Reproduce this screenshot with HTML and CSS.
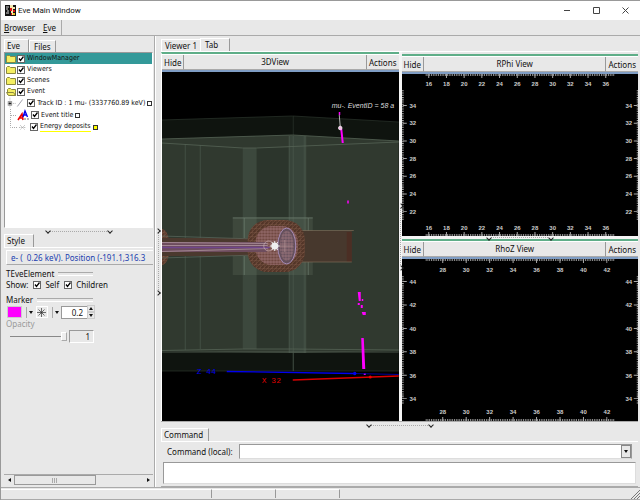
FILE: index.html
```html
<!DOCTYPE html>
<html lang="en">

<head>
  <meta charset="utf-8">
  <title>Eve Main Window</title>
  <link rel="stylesheet" href="styles.css">
</head>

<body>
  <header class="titlebar">
    <svg class="logo" width="11" height="11" viewBox="0 0 11 11">
      <rect width="11" height="11" fill="#111" />
      <path d="M1 2h3M1 4h2M2 6h2M1 8h3" stroke="#ddd" />
      <path d="M5 0h3v2h2v2H8v6H6V5H5z" fill="#f4e9b0" />
      <path d="M5 3h2v3H5zM8 5h2v2H8zM6 8h1v2H6z" fill="#d11" />
      <path d="M8 8h2v2H8z" fill="#e8c020" />
    </svg>
    <h1>Eve Main Window</h1>
    <div class="window-buttons">
      <button aria-label="Minimize"><svg width="7" height="7" viewBox="0 0 7 7"><path d="M0 3.5h6" /></svg></button>
      <button aria-label="Maximize"><svg width="7" height="7" viewBox="0 0 7 7"><path d="M.5.5h6v6h-6z" /></svg></button>
      <button aria-label="Close"><svg width="7" height="7" viewBox="0 0 7 7"><path d="M.5.5l6 6M6.5.5l-6 6" /></svg></button>
    </div>
  </header>

  <nav class="menubar">
    <button><u>B</u>rowser</button>
    <button><u>E</u>ve</button>
  </nav>

  <main>
    <aside>
      <div class="tabs">
        <button class="tab active">Eve</button>
        <button class="tab">Files</button>
      </div>
      <ul class="tree">
        <li class="selected"><svg class="folder" width="10" height="8" viewBox="0 0 10 8"><path d="M.5 7.5v-6l1-1h2l1 1h5v6z" /></svg>
          <label><input type="checkbox" checked>WindowManager</label></li>
        <li><svg class="folder" width="10" height="8" viewBox="0 0 10 8"><path d="M.5 7.5v-6l1-1h2l1 1h5v6z" /></svg>
          <label><input type="checkbox" checked>Viewers</label></li>
        <li><svg class="folder" width="10" height="8" viewBox="0 0 10 8"><path d="M.5 7.5v-6l1-1h2l1 1h5v6z" /></svg>
          <label><input type="checkbox" checked>Scenes</label></li>
        <li><svg class="folder" width="10" height="8" viewBox="0 0 10 8"><path d="M1.5 6.5v-5l1-1h2l1 1h4v6z" /><path d="M.5 4.5h7l2 3h-7z" /></svg>
          <label><input type="checkbox" checked>Event</label>
        </li>
        <li class="child">
          <svg width="22" height="12" viewBox="0 0 22 12">
            <path d="M4.500 0v12M6 6.500h6" stroke="#aaa" stroke-dasharray="1 1" />
            <rect x="2.500" y="4.500" width="4" height="4" fill="#fff" stroke="#888" />
            <path d="M3 6.500h3M4.500 5v3" stroke="#000" />
            <path d="M13 10l6-8" stroke="#778" stroke-width=".8" />
          </svg>
          <label><input type="checkbox" checked>Track ID : 1 mu- (3337760.89 keV)</label><i class="swatch"></i>
        </li>
        <li class="child title">
          <svg width="23" height="12" viewBox="0 0 23 12">
            <path d="M4.500 0v12M5 6.500h6" stroke="#aaa" stroke-dasharray="1 1" />
            <path d="M12 11l4-6 1 6M14 9h3" stroke="#e00" stroke-width="1.600" fill="none" />
            <path d="M17 8l2-6 2.500 6M18 6h3" stroke="#00e" stroke-width="1.400" fill="none" />
            <path d="M19.500 9l-1 1 1 1M21.500 9l1 1-1 1" stroke="#333" stroke-width=".7" fill="none" />
          </svg>
          <label><input type="checkbox" checked>Event title</label><i class="swatch"></i>
        </li>
        <li class="child">
          <svg width="22" height="12" viewBox="0 0 22 12">
            <path d="M4.500 0v6.500h7" stroke="#aaa" fill="none" stroke-dasharray="1 1" />
            <path d="M14 4l5 5M19 4l-5 5M13 6.500h7" stroke="#999" stroke-width=".7" stroke-dasharray="1 .7" />
          </svg>
          <label><input type="checkbox" checked><span class="mark">Energy deposits</span></label><i class="swatch yellow"></i>
        </li>
      </ul>
      <div class="split-h"><div class="grip"></div></div>
      <div class="tabs">
        <button class="tab active">Style</button>
      </div>
      <form class="style-panel">
        <div class="element-name">e- (&nbsp; 0.26 keV). Position (-191.1,316.3</div>
        <h2>TEveElement</h2>
        <div class="row show">
          <span>Show:</span>
          <label><input type="checkbox" checked>Self</label>
          <label><input type="checkbox" checked>Children</label>
        </div>
        <h2>Marker</h2>
        <div class="row marker">
          <button type="button" class="color" aria-label="Marker color"></button>
          <button type="button" class="drop" aria-label="Choose color"></button>
          <button type="button" class="shape" aria-label="Marker style">
            <svg width="9" height="9" viewBox="0 0 9 9"><path d="M4.500 0v9M0 4.500h9M1.500 1.500l6 6M7.500 1.500l-6 6" stroke="#333" stroke-width=".7" /></svg>
          </button>
          <button type="button" class="drop" aria-label="Choose style"></button>
          <input class="size" type="text" value="0.2" aria-label="Marker size">
          <span class="spin">
            <button type="button" aria-label="Increase" class="up"></button>
            <button type="button" aria-label="Decrease"></button>
          </span>
        </div>
        <label class="opacity" for="opacity">Opacity</label>
        <div class="row">
          <input id="opacity" type="range" min="0" max="1" step="0.01" value="1" disabled>
          <input class="opacity-value" type="text" value="1" aria-label="Opacity value" disabled>
        </div>
      </form>
      <div class="scrollbar">
        <button class="left" aria-label="Scroll left"></button>
        <div class="thumb"></div>
        <button class="right" aria-label="Scroll right"></button>
      </div>
    </aside>

    <div class="split-v"><div class="grip"></div></div>

    <div class="content">
      <div class="tabs">
        <button class="tab">Viewer 1</button>
        <button class="tab active wide">Tab</button>
      </div>
      <div class="viewers">
        <section class="viewer view3d">
          <div class="viewer-head"><button>Hide</button><h3>3DView</h3><button>Actions</button></div>
          <svg class="canvas" viewBox="162 72 237 349" preserveAspectRatio="xMidYMid slice">
            <defs>
              <pattern id="mesh" width="4" height="4" patternUnits="userSpaceOnUse">
                <path d="M0 0h4M0 0v4M0 4l4-4" stroke="#8c6250" stroke-width=".5" fill="none" />
              </pattern>
              <pattern id="pink" width="3" height="3" patternUnits="userSpaceOnUse">
                <path d="M0 1h3M1 0v3" stroke="#a97d86" stroke-width=".6" />
              </pattern>
            </defs>
            <!-- hall -->
            <path d="M162 120l131-4 106 6v249H162z" fill="#0f140f" />
            <path d="M162 120l131-4 106 6M162 371h237M293.500 116v255" stroke="#2b352c" stroke-width=".7" fill="none" />
            <path d="M162 139l131-4 106 6v210l-106 2-131-2z" fill="#30392f" />
            <path d="M243 148h14v201h-14z" fill="#3c483d" />
            <path d="M257 148h32v201h-32z" fill="#2c352c" />
            <path d="M289 136h17v217h-17z" fill="#38443a" />
            <path d="M185.500 144v206M200.500 145v204M289.500 136v217M293.500 136v235M304.500 136v217M306 136v217" stroke="#4c594d" stroke-width=".7" />
            <path d="M162 139l131-4 106 6M162 143l81 5h14l142-6M162 350.500l81-1.500h50l106 1M162 352h237" stroke="#556356" stroke-width=".8" fill="none" />
            <!-- detector envelope -->
            <rect x="233" y="217" width="80" height="58" fill="#70806f" fill-opacity=".22" />
            <path d="M233 218h80M244.500 218v57M308.500 218v57" stroke="#6c7b6d" stroke-width=".7" />
            <rect x="300" y="231" width="52" height="31" fill="#47382d" />
            <rect x="347" y="232" width="5" height="30" fill="#4b2e24" />
            <path d="M296 230.500h58M300 262h52" stroke="#7c6b58" stroke-width=".7" />
            <!-- beam line -->
            <ellipse cx="162" cy="247" rx="8" ry="18" fill="#5a3a2c" />
            <ellipse cx="162" cy="247" rx="8" ry="18" fill="url(#mesh)" />
            <rect x="162" y="238" width="96" height="18" fill="#4b392e" />
            <path d="M162 236l94 3M162 258l94-3" stroke="#5c6a5e" stroke-width=".7" />
            <!-- barrel -->
            <rect x="248" y="220" width="57" height="52" rx="20" fill="#523528" />
            <rect x="248" y="220" width="57" height="52" rx="20" fill="url(#mesh)" />
            <rect x="256" y="226" width="42" height="39" rx="16" fill="#6b443b" />
            <rect x="256" y="226" width="42" height="39" rx="16" fill="url(#pink)" />
            <ellipse cx="287" cy="246" rx="9" ry="18" fill="#65505c" stroke="#a58bb5" />
            <ellipse cx="287" cy="246" rx="7" ry="15" fill="url(#pink)" />
            <rect x="162" y="242" width="105" height="10" fill="#6d4c5d" />
            <path d="M162 242.500l106 1M162 245.500h106M162 251.500l106-3" stroke="#b197a1" stroke-width=".8" />
            <path d="M162 247.500h108" stroke="#70468c" stroke-width="1.500" />
            <ellipse cx="269" cy="246" rx="5" ry="5" fill="none" stroke="#c6a9ac" stroke-width=".7" />
            <path d="M275 241v10M270 246h10M272 242l6 8M278 242l-6 8" stroke="#eee" />
            <circle cx="275" cy="246" r="3.500" fill="#eee" />
            <path d="M285 240v12M280 246h13" stroke="#b99" stroke-width=".6" />
            <!-- energy deposits -->
            <path d="M339.500 115l1 12" stroke="#ddd" stroke-width=".8" />
            <g fill="#f0f">
              <path d="M340.500 129h2l1.500 14h-2zM358 292h3v9h-2zM361.500 338h2.500l1.500 31h-3z" />
              <path d="M339 112h1.500v3H339zM347.500 200.500h1.500v3h-1.500zM358 303h2v2h-2zM362 299h1.500v2H362zM361 305h2v3h-2zM362 312h4v3h-3zM364 373h2v2h-2z" />
            </g>
            <circle cx="340.500" cy="128" r="1.800" fill="#f7b8e8" stroke="#fff" stroke-width=".7" />
            <!-- axes -->
            <path d="M227 371.500l127 2" stroke="#00e" stroke-width="1.300" />
            <path d="M354 373.500l45 1" stroke="#009" />
            <circle cx="355" cy="373.500" r="1.700" fill="#00e" />
            <path d="M293 380l106-4" stroke="#d00" stroke-width="1.300" />
            <circle cx="370.500" cy="377" r="1.500" fill="#e00" />
            <text class="axis blue" x="197" y="374">Z 44</text>
            <text class="axis red" x="262" y="383">X 32</text>
            <text class="event-title" x="332" y="108">mu-. EventID = 58 a</text>
          </svg>
        </section>

        <div class="split-views"><div class="grip"></div></div>

        <div class="projections">
          <section class="viewer">
            <div class="viewer-head"><button>Hide</button><h3>RPhi View</h3><button>Actions</button></div>
            <svg class="canvas ruler" viewBox="401 74 237 162" preserveAspectRatio="xMidYMid slice">
              <g class="minor">
                <path d="M425 75h189M425 235h189M402 90v131M637 90v131" />
              </g>
              <g class="major">
                <path d="M427.500 76h178M427.500 234h178" />
                <path class="side" d="M404 105v107M635 105v107" />
              </g>
              <g id="rphi"></g>
            </svg>
          </section>
          <div class="split-h"><div class="grip"></div></div>
          <section class="viewer">
            <div class="viewer-head"><button>Hide</button><h3>RhoZ View</h3><button>Actions</button></div>
            <svg class="canvas ruler" viewBox="401 259 237 162" preserveAspectRatio="xMidYMid slice">
              <g class="minor">
                <path d="M425 260h189M425 420h189M402 276v128M637 276v128" />
              </g>
              <g class="major rhoz">
                <path d="M441.500 261h165M441.500 419h165" />
                <path class="side" d="M404 281v118M635 281v118" />
              </g>
              <g id="rhoz"></g>
            </svg>
          </section>
        </div>
      </div>

      <div class="split-h main-split"><div class="grip"></div></div>

      <div class="tabs command-tabs">
        <button class="tab active">Command</button>
      </div>
      <div class="command">
        <div class="command-row">
          <label for="command">Command (local):</label>
          <div class="combo">
            <input id="command" type="text">
            <button aria-label="History"></button>
          </div>
        </div>
        <textarea class="output" aria-label="Command output" readonly></textarea>
      </div>
    </div>
  </main>

  <footer class="statusbar">
    <span class="wide"></span><span></span><span></span>
    <svg width="9" height="9" viewBox="0 0 9 9"><path d="M0 9l9-9M3 9l6-6M6 9l3-3" stroke="#777" /></svg>
  </footer>

  <script>
    // Adds one number label to a ruler
    function label(group, x, y, value) {
      const el = document.createElementNS('http://www.w3.org/2000/svg', 'text')
      el.setAttribute('x', x)
      el.setAttribute('y', y)
      el.textContent = value
      group.appendChild(el)
    }

    function drawLabels(id, h, v) {
      const group = document.getElementById(id)
      for (let i = 0; i < h.count; i++) {
        for (const y of h.rows) label(group, h.start + i * h.step, y, h.first + i * 2)
      }
      for (let i = 0; i < v.count; i++) {
        for (const x of [412, 628]) label(group, x, v.start + i * v.step, v.first - i * 2)
      }
    }

    drawLabels('rphi',
      { first: 16, count: 11, start: 428, step: 17.7, rows: [86, 230] },
      { first: 34, count: 7, start: 107.5, step: 17.7 })
    drawLabels('rhoz',
      { first: 28, count: 8, start: 442, step: 23.45, rows: [272, 414] },
      { first: 44, count: 6, start: 284, step: 23.45 })
  </script>
</body>

</html>
```

FILE: styles.css
```css
* {
  box-sizing: border-box;
}

body {
  margin: 0;
  height: 100vh;
  display: flex;
  flex-direction: column;
  overflow: hidden;
  background: #e8e8e8;
  color: #111;
  font: 8px/10px "Noto Sans", sans-serif;
  border-top: 1px solid #999;
  border-left: 1px solid #999;
}

button,
input,
textarea {
  margin: 0;
  padding: 0;
  border: 0;
  border-radius: 0;
  background: none;
  color: inherit;
  font: inherit;
}

h1,
h2,
h3,
ul {
  margin: 0;
  padding: 0;
  font: inherit;
}

.titlebar {
  display: flex;
  align-items: center;
  height: 19px;
  padding-left: 4px;
  background: #fff;
}

.titlebar h1 {
  flex: 1;
  margin-left: 2px;
  font: 8px/12px Roboto, sans-serif;
}

.window-buttons {
  display: flex;
}

.window-buttons button {
  width: 29px;
  height: 19px;
}

.window-buttons svg {
  display: block;
  margin: 0 auto;
  fill: none;
  stroke: #444;
}

.menubar {
  display: flex;
  gap: 8px;
  height: 16px;
  padding-left: 3px;
  border-bottom: 1px solid #aaa;
}

.menubar button:last-child {
  padding-right: 5px;
  border-right: 1px solid #aaa;
}

main {
  flex: 1;
  display: flex;
  min-height: 0;
  padding-right: 2px;
}

aside {
  width: 154px;
  display: flex;
  flex-direction: column;
  padding: 3px 1px 2px 3px;
  border-right: 1px solid #aaa;
}

.tabs {
  display: flex;
  align-items: flex-end;
  height: 13px;
  flex: none;
}

.tab {
  height: 12px;
  padding: 0 4px;
  border-top: 1px solid #fff;
  border-left: 1px solid #fff;
  border-right: 1px solid #999;
}

.tab.active {
  height: 13px;
  padding: 0 8px 1px 2px;
}

.tab:first-child:not(.active) {
  padding: 0 3px;
  border-right: 0;
}

.tab.wide {
  padding: 0 11px 1px 4px;
}

/* Tree */

.tree {
  height: 176px;
  flex: none;
  list-style: none;
  background: #fff;
  border: 1px solid #999;
  border-right-color: #fff;
  border-bottom-color: #fff;
  font: 7px/9px "DejaVu Sans Condensed", "DejaVu Sans", sans-serif;
}

.tree li {
  display: flex;
  align-items: center;
  height: 11px;
  padding-left: 1px;
  gap: 1px;
  white-space: nowrap;
}

.tree li.child {
  height: 12px;
  gap: 2px;
}

.tree .selected {
  background: #339999;
}

.tree label {
  display: flex;
  align-items: center;
  gap: 2px;
}

.folder {
  fill: #f4ee62;
  stroke: #8a8740;
}

input[type="checkbox"] {
  appearance: none;
  width: 8px;
  height: 8px;
  border: 1px solid #666;
  background: #fff url("data:image/svg+xml,%3Csvg xmlns='http://www.w3.org/2000/svg' viewBox='0 0 6 6'%3E%3Cpath d='M1 2.500l1.500 2 3-4' fill='none' stroke='%23000' stroke-width='1.300'/%3E%3C/svg%3E");
}

.swatch {
  width: 5px;
  height: 5px;
  border: 1px solid #333;
}

.swatch.yellow {
  background: #ff0;
}

.mark {
  border-bottom: 1px solid #ff0;
}

/* Splitters */

.split-h {
  height: 6px;
  flex: none;
  display: flex;
  align-items: center;
  justify-content: center;
}

.split-h .grip {
  width: 66px;
  height: 5px;
  display: flex;
  align-items: center;
  justify-content: space-between;
  background: repeating-linear-gradient(90deg, #aaa 0 1px, transparent 1px 2px) center / 58px 1px no-repeat;
}

.split-v,
.split-views {
  flex: none;
  display: flex;
  align-items: center;
}

.split-v {
  width: 6px;
  border-left: 1px solid #fff;
}

.grip::before,
.grip::after {
  content: "";
  width: 3px;
  height: 3px;
  border: solid #222;
  border-width: 0 1px 1px 0;
  transform: rotate(45deg);
}

.split-v .grip,
.split-views .grip {
  width: 4px;
  height: 66px;
  display: flex;
  flex-direction: column;
  align-items: flex-start;
  justify-content: space-between;
  background: repeating-linear-gradient(#aaa 0 1px, transparent 1px 2px) center / 1px 58px no-repeat;
}

.split-v .grip::before,
.split-v .grip::after,
.split-views .grip::before,
.split-views .grip::after {
  transform: rotate(-45deg);
}

/* Style editor */

.style-panel {
  flex: 1;
  min-height: 0;
  overflow: hidden;
  padding: 2px 0 0 2px;
  border-top: 1px solid #fff;
}

.element-name {
  height: 15px;
  padding: 2px 0 0 4px;
  overflow: hidden;
  white-space: nowrap;
  color: #2040b0;
  border: 1px solid #fff;
  border-right: 0;
  border-bottom-color: #aaa;
}

.style-panel h2 {
  display: flex;
  align-items: center;
  gap: 4px;
  width: 87px;
  margin-top: 4px;
}

.style-panel h2::after {
  content: "";
  flex: 1;
  height: 2px;
  border-top: 1px solid #aaa;
  border-bottom: 1px solid #fff;
}

.row {
  display: flex;
  align-items: center;
}

.show {
  gap: 5px;
  height: 12px;
}

.show label {
  display: flex;
  align-items: center;
  gap: 4px;
}

.marker {
  height: 14px;
}

.color {
  width: 15px;
  height: 12px;
  margin: 0 4px 0 1px;
  border: 1px solid #ccc;
  background: #f0f;
}

.shape {
  width: 12px;
  height: 12px;
  margin: 0 4px;
  border: 1px solid #fff;
}

.shape svg {
  display: block;
}

.drop {
  width: 6px;
  height: 11px;
  display: flex;
  align-items: center;
  padding-left: 2px;
  border-left: 1px solid #aaa;
}

.drop::before,
.spin button::before,
.combo button::before {
  content: "";
  border: 2px solid transparent;
  border-top: 3px solid #111;
  border-bottom: 0;
}

.size {
  width: 26px;
  height: 13px;
  margin-left: 3px;
  padding-right: 4px;
  text-align: right;
  background: #fff;
  border: 1px solid #999;
  border-right: 0;
}

.spin button {
  width: 8px;
  height: 7px;
  display: flex;
  align-items: center;
  justify-content: center;
  border: 1px solid #ccc;
}

.spin .up::before {
  transform: rotate(180deg);
}

.opacity {
  display: block;
  color: #999;
}

#opacity {
  appearance: none;
  width: 57px;
  height: 14px;
  margin-left: 4px;
  background: linear-gradient(#888, #888) center / 100% 1px no-repeat;
}

#opacity::-webkit-slider-thumb {
  appearance: none;
  width: 6px;
  height: 9px;
  background: #eee;
  border: 1px solid #fff;
  border-right-color: #aaa;
  border-bottom-color: #aaa;
}

.opacity-value {
  width: 25px;
  height: 13px;
  margin-left: 2px;
  padding-right: 3px;
  text-align: right;
  border: 1px solid #999;
  border-right-color: #fff;
  border-bottom-color: #fff;
}

.scrollbar {
  display: flex;
  height: 11px;
  border-top: 1px solid #aaa;
}

.scrollbar button {
  width: 10px;
  display: flex;
  align-items: center;
  justify-content: center;
}

.scrollbar button::before {
  content: "";
  border: 2px solid transparent;
}

.scrollbar .left::before {
  border-left: 0;
  border-right: 3px solid #111;
}

.scrollbar .right {
  margin-left: auto;
}

.scrollbar .right::before {
  border-right: 0;
  border-left: 3px solid #111;
}

.thumb {
  width: 55%;
  border: 1px solid #999;
  background: repeating-linear-gradient(90deg, #aaa 0 1px, transparent 1px 2px) center / 5px 5px no-repeat;
}

/* Viewers */

.content {
  flex: 1;
  min-width: 0;
  display: flex;
  flex-direction: column;
  padding-top: 2px;
}

.viewers {
  flex: 1;
  min-height: 0;
  display: flex;
  border-top: 1px solid #fff;
}

.viewer {
  flex: 1;
  min-width: 0;
  min-height: 0;
  display: flex;
  flex-direction: column;
  border-top: 2px solid #5fae88;
}

.view3d {
  border-left: 1px solid #fff;
}

.viewer-head {
  display: flex;
  flex: none;
  height: 18px;
  border-top: 1px solid #fff;
  border-bottom: 2px solid #7f9dc4;
}

.viewer-head h3,
.viewer-head button {
  line-height: 13px;
  border-bottom: 1px solid #aaa;
}

.viewer-head h3 {
  flex: 1;
  text-align: center;
  border-left: 1px solid #999;
  border-right: 1px solid #999;
}

.viewer-head button {
  padding: 0 2px;
}

.canvas {
  flex: 1;
  min-height: 0;
  width: 100%;
  display: block;
  background: #000;
}

.split-views {
  width: 3px;
  background: #f4f4f4;
}

.projections {
  flex: 1;
  min-width: 0;
  display: flex;
  flex-direction: column;
  padding-top: 2px;
}

.projections .split-h {
  height: 3px;
  background: #f4f4f4;
}

.axis {
  font: 8px "Liberation Mono", monospace;
}

.blue {
  fill: #00e;
}

.red {
  fill: #d00;
}

.event-title {
  fill: #ddd;
  font: italic 7px "Liberation Sans", sans-serif;
}

.ruler path {
  fill: none;
  stroke: #aaa;
}

.ruler .minor path {
  stroke-width: 2;
  stroke-dasharray: .8 .97;
}

.ruler .major path {
  stroke-width: 4;
  stroke-dasharray: 1 16.7;
}

.ruler .rhoz path {
  stroke-dasharray: 1 22.45;
}

.ruler text {
  fill: #ccc;
  font: bold 6px "Liberation Sans", sans-serif;
  text-anchor: middle;
}

/* Command line */

.main-split {
  height: 7px;
  border-top: 1px solid #aaa;
}

.command-tabs .tab.active {
  padding-right: 5px;
}

.command {
  padding: 2px;
  border-top: 1px solid #fff;
  border-bottom: 1px solid #aaa;
}

.command-row {
  display: flex;
  align-items: center;
  gap: 6px;
  padding: 0 4px;
  margin-bottom: 3px;
}

.combo {
  flex: 1;
  display: flex;
  height: 15px;
  background: #fff;
  border: 1px solid #999;
  border-bottom-color: #ddd;
}

.combo input {
  flex: 1;
  min-width: 0;
}

.combo button {
  width: 10px;
  display: flex;
  align-items: center;
  justify-content: center;
  background: #e8e8e8;
  border: 1px solid #888;
}

.output {
  display: block;
  width: 100%;
  height: 22px;
  resize: none;
  background: #fff;
  border: 1px solid #999;
  border-right-color: #ddd;
  border-bottom-color: #ddd;
}

/* Status bar */

.statusbar {
  display: flex;
  height: 13px;
  flex: none;
  border-top: 1px solid #aaa;
  border-bottom: 1px solid #aaa;
}

.statusbar span {
  width: 10%;
  margin: 1px 0;
  border-top: 1px solid #fff;
  border-right: 1px solid #999;
}

.statusbar .wide {
  width: 33%;
}

.statusbar svg {
  margin-left: auto;
  align-self: flex-end;
}
```
